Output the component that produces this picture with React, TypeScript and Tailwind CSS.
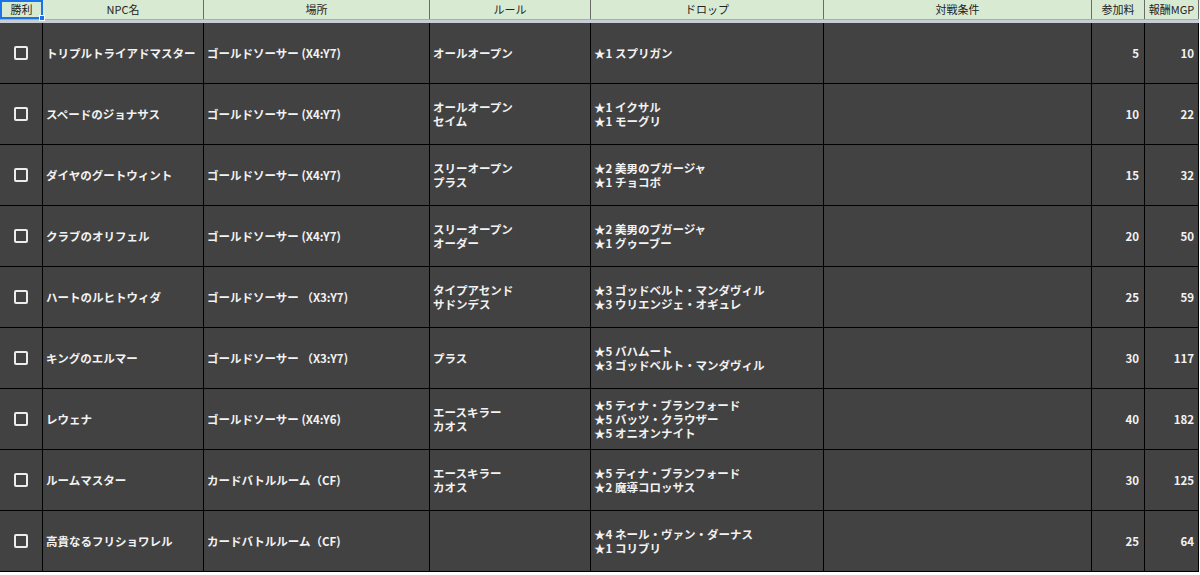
import React from "react";

type Row = {
  npc: string;
  place: string;
  rules: string[];
  drops: string[];
  fee: number;
  mgp: number;
};

const rows: Row[] = [
  { npc: "トリプルトライアドマスター", place: "ゴールドソーサー (X4:Y7)", rules: ["オールオープン"], drops: ["★1 スプリガン"], fee: 5, mgp: 10 },
  { npc: "スペードのジョナサス", place: "ゴールドソーサー (X4:Y7)", rules: ["オールオープン", "セイム"], drops: ["★1 イクサル", "★1 モーグリ"], fee: 10, mgp: 22 },
  { npc: "ダイヤのグートウィント", place: "ゴールドソーサー (X4:Y7)", rules: ["スリーオープン", "プラス"], drops: ["★2 美男のブガージャ", "★1 チョコボ"], fee: 15, mgp: 32 },
  { npc: "クラブのオリフェル", place: "ゴールドソーサー (X4:Y7)", rules: ["スリーオープン", "オーダー"], drops: ["★2 美男のブガージャ", "★1 グゥーブー"], fee: 20, mgp: 50 },
  { npc: "ハートのルヒトウィダ", place: "ゴールドソーサー （X3:Y7)", rules: ["タイプアセンド", "サドンデス"], drops: ["★3 ゴッドベルト・マンダヴィル", "★3 ウリエンジェ・オギュレ"], fee: 25, mgp: 59 },
  { npc: "キングのエルマー", place: "ゴールドソーサー （X3:Y7)", rules: ["プラス"], drops: ["★5 バハムート", "★3 ゴッドベルト・マンダヴィル"], fee: 30, mgp: 117 },
  { npc: "レウェナ", place: "ゴールドソーサー (X4:Y6)", rules: ["エースキラー", "カオス"], drops: ["★5 ティナ・ブランフォード", "★5 バッツ・クラウザー", "★5 オニオンナイト"], fee: 40, mgp: 182 },
  { npc: "ルームマスター", place: "カードバトルルーム（CF)", rules: ["エースキラー", "カオス"], drops: ["★5 ティナ・ブランフォード", "★2 魔導コロッサス"], fee: 30, mgp: 125 },
  { npc: "高貴なるフリショワレル", place: "カードバトルルーム（CF)", rules: [], drops: ["★4 ネール・ヴァン・ダーナス", "★1 コリブリ"], fee: 25, mgp: 64 },
];

const cols = "grid grid-cols-[43px_161px_226px_161px_233px_268px_53px_54px]";
const font = { fontFamily: '"Noto Sans CJK JP", "Liberation Sans", sans-serif' };

export default function App() {
  return (
    <div className="w-[1200px] h-[575px] bg-white overflow-hidden" style={font}>
      <div className={`${cols} h-[19px] w-[1199px] bg-[#d9ead3] text-[11px] text-[#222] leading-[19px] text-center`}>
        <div className="relative border-2 border-[#1a73e8] leading-[15px]">
          勝利
          <div className="absolute -right-[4px] -bottom-[4px] w-[6px] h-[6px] bg-[#1a73e8] border border-white" />
        </div>
        <div className="border-r border-[#6b6b6b]">NPC名</div>
        <div className="border-r border-[#6b6b6b]">場所</div>
        <div className="border-r border-[#6b6b6b]">ルール</div>
        <div className="border-r border-[#6b6b6b]">ドロップ</div>
        <div className="border-r border-[#6b6b6b]">対戦条件</div>
        <div className="border-r border-[#6b6b6b]">参加料</div>
        <div className="border-r border-[#6b6b6b]">報酬MGP</div>
      </div>
      <div className="h-[4px] w-[1199px] bg-[#c9ced6] border-t border-[#a8adb5]" />
      {rows.map((r, i) => (
        <div key={i} className={`${cols} h-[61px] bg-[#424242] border-b border-black text-[11.5px] font-bold text-[#f2f2f2] leading-[14px] w-[1199px]`}>
          <div className="flex items-center justify-center border-r border-black">
            <div className="w-[14px] h-[14px] border-2 border-[#ececec] rounded-[2px]" />
          </div>
          <div className="flex items-center px-[3px] border-r border-black whitespace-nowrap overflow-hidden">{r.npc}</div>
          <div className="flex items-center px-[3px] border-r border-black whitespace-nowrap overflow-hidden">{r.place}</div>
          <div className="flex flex-col justify-center px-[3px] border-r border-black whitespace-nowrap">
            {r.rules.map((t, j) => (
              <div key={j}>{t}</div>
            ))}
          </div>
          <div className="flex flex-col justify-center px-[3px] border-r border-black whitespace-nowrap">
            {r.drops.map((t, j) => (
              <div key={j}>{t}</div>
            ))}
          </div>
          <div className="border-r border-black" />
          <div className="flex items-center justify-end px-[5px] border-r border-black">{r.fee}</div>
          <div className="flex items-center justify-end px-[4px] border-r border-black">{r.mgp}</div>
        </div>
      ))}
    </div>
  );
}
